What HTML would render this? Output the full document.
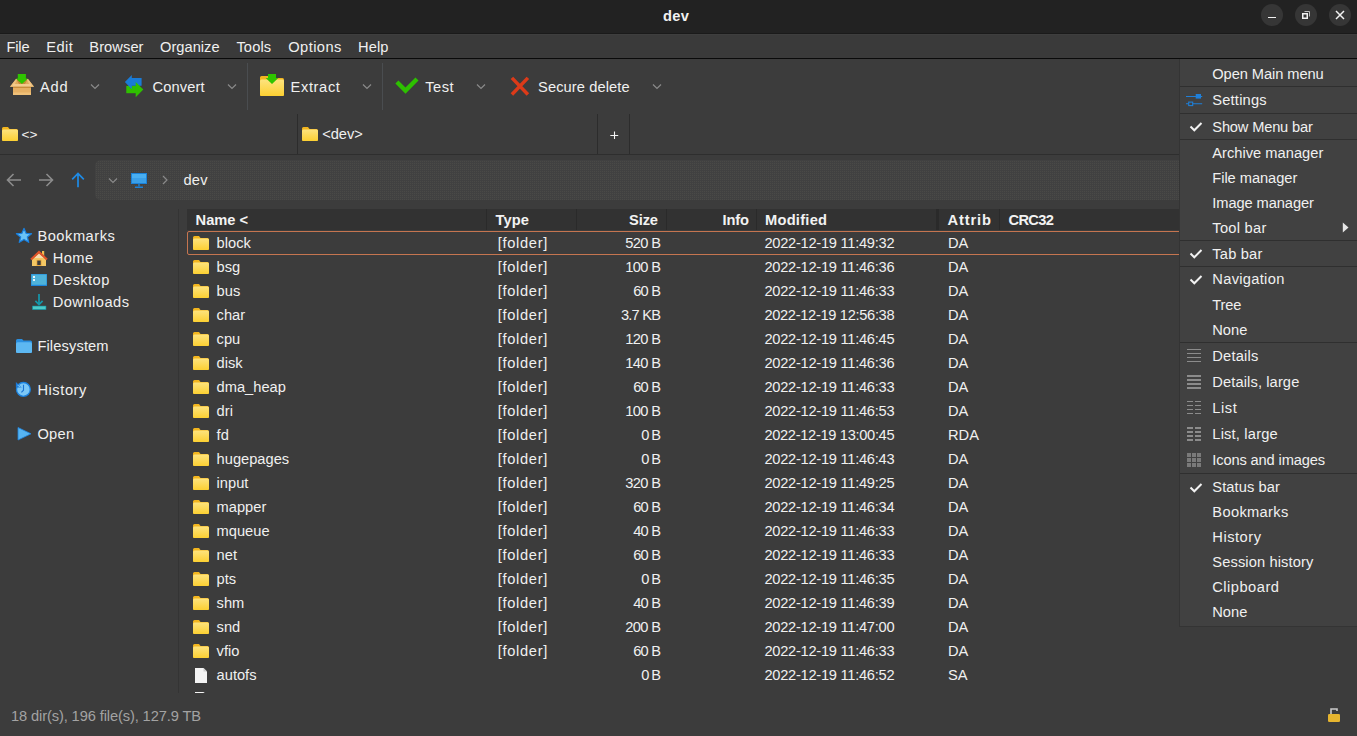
<!DOCTYPE html>
<html><head><meta charset="utf-8"><style>
html,body{margin:0;padding:0;}
body{width:1357px;height:736px;overflow:hidden;position:relative;background:#3c3c3c;font-family:"Liberation Sans",sans-serif;}
.t{position:absolute;white-space:pre;line-height:normal;}
svg{overflow:visible}
</style></head><body>
<svg width="0" height="0" style="position:absolute"><defs><linearGradient id="fg" x1="0" y1="0" x2="0" y2="1"><stop offset="0" stop-color="#fde37e"/><stop offset="1" stop-color="#fcd032"/></linearGradient></defs></svg>
<div style="position:absolute;left:0px;top:0px;width:1357px;height:33px;background:#222222;"></div>
<div style="position:absolute;left:0px;top:33px;width:1357px;height:1px;background:#1a1a1a;"></div>
<div style="position:absolute;left:0px;top:34px;width:1357px;height:24px;background:#3a3a3a;"></div>
<div style="position:absolute;left:0px;top:34px;width:1357px;height:1px;background:#3e3e3e;"></div>
<div style="position:absolute;left:0px;top:58px;width:1357px;height:1px;background:#0a0a0a;"></div>
<div class="t" style="left:663.00px;top:7.72px;color:#f2f2f2;font-size:14.67px;font-weight:700;letter-spacing:0.367px;">dev</div>
<div style="position:absolute;left:1261px;top:4px;width:22px;height:22px;border-radius:11px;background:#363636"></div>
<div style="position:absolute;left:1295px;top:4px;width:22px;height:22px;border-radius:11px;background:#363636"></div>
<div style="position:absolute;left:1329px;top:4px;width:22px;height:22px;border-radius:11px;background:#363636"></div>
<div style="position:absolute;left:1268px;top:16.5px;width:8px;height:1.6px;background:#f0f0f0;"></div>
<svg style="position:absolute;left:1298px;top:8px" width="14" height="14" viewBox="0 0 14 14"><path d="M6.5 3.5H11.5V8.5" fill="none" stroke="#bdbdbd" stroke-width="1"/><rect x="4.75" y="5.75" width="4.5" height="4.5" fill="none" stroke="#f2f2f2" stroke-width="1.5"/></svg>
<svg style="position:absolute;left:1333px;top:8px" width="14" height="14" viewBox="0 0 14 14"><path d="M3 3L11 11M11 3L3 11" stroke="#f2f2f2" stroke-width="1.5"/></svg>
<div class="t" style="left:6.50px;top:38.72px;color:#f0f0f0;font-size:14.67px;font-weight:400;letter-spacing:-0.175px;">File</div>
<div class="t" style="left:46.30px;top:38.72px;color:#f0f0f0;font-size:14.67px;font-weight:400;letter-spacing:0.411px;">Edit</div>
<div class="t" style="left:89.30px;top:38.72px;color:#f0f0f0;font-size:14.67px;font-weight:400;letter-spacing:0.072px;">Browser</div>
<div class="t" style="left:160.00px;top:38.72px;color:#f0f0f0;font-size:14.67px;font-weight:400;letter-spacing:0.017px;">Organize</div>
<div class="t" style="left:236.40px;top:38.72px;color:#f0f0f0;font-size:14.67px;font-weight:400;letter-spacing:0.145px;">Tools</div>
<div class="t" style="left:288.30px;top:38.72px;color:#f0f0f0;font-size:14.67px;font-weight:400;letter-spacing:0.414px;">Options</div>
<div class="t" style="left:358.10px;top:38.72px;color:#f0f0f0;font-size:14.67px;font-weight:400;letter-spacing:0.081px;">Help</div>
<div style="position:absolute;left:247px;top:63px;width:1px;height:47px;background:#4a4d50;"></div>
<div style="position:absolute;left:382px;top:63px;width:1px;height:47px;background:#4a4d50;"></div>
<svg style="position:absolute;left:8px;top:70px" width="30" height="30" viewBox="0 0 30 30">
<path d="M2 16.8L8 9H20L26 16.8Z" fill="#e0aa5c"/>
<path d="M2 16.8L8 9L9.5 9L5.5 16.8Z" fill="#eec27e"/>
<path d="M26 16.8L20 9L18.5 9L22.5 16.8Z" fill="#eec27e"/>
<path d="M8.5 9.5H19.5L17 14H11Z" fill="#c58a38"/>
<rect x="5" y="14" width="18" height="2.8" fill="#f3ca8c"/>
<rect x="5" y="16.8" width="18" height="8.2" fill="#e6b064"/>
<rect x="5" y="16.8" width="18" height="1.2" fill="#c78d3c"/>
<rect x="5" y="22.5" width="18" height="2.5" fill="#efc078"/>
<path d="M9.8 4H17.9V8.4H20L13.9 14L7.8 8.4H9.8Z" fill="#2fc400"/>
</svg>
<div class="t" style="left:40.00px;top:78.72px;color:#f0f0f0;font-size:14.67px;font-weight:400;letter-spacing:0.761px;">Add</div>
<svg style="position:absolute;left:90px;top:83px" width="10" height="7" viewBox="0 0 10 7"><path d="M1 1.5L5 5.5L9 1.5" fill="none" stroke="#8a8a8a" stroke-width="1.2"/></svg>
<svg style="position:absolute;left:120px;top:70px" width="30" height="30" viewBox="0 0 30 30">
<rect x="6.3" y="15.9" width="10.2" height="7.3" fill="#2fc000"/>
<path d="M4.9 12L11.8 4.9V8H21.6V15.7H11.8V19.2Z" fill="#1a7bd6"/>
<path d="M23.3 19.6L15.7 12.1V27.3Z" fill="#2fc000"/>
</svg>
<div class="t" style="left:152.60px;top:78.72px;color:#f0f0f0;font-size:14.67px;font-weight:400;letter-spacing:0.112px;">Convert</div>
<svg style="position:absolute;left:227px;top:83px" width="10" height="7" viewBox="0 0 10 7"><path d="M1 1.5L5 5.5L9 1.5" fill="none" stroke="#8a8a8a" stroke-width="1.2"/></svg>
<svg style="position:absolute;left:256px;top:70px" width="32" height="30" viewBox="0 0 32 30">
<path d="M4 7.5Q4 6 5.5 6H12L13 8H26.5Q28 8 28 9.5V24.5Q28 26 26.5 26H5.5Q4 26 4 24.5Z" fill="#f2b51e"/>
<rect x="4" y="9.5" width="24" height="16.5" rx="1.5" fill="url(#fg)"/>
<path d="M12 4H20V8H22.3L16 14L9.7 8H12Z" fill="#2fc400"/>
</svg>
<div class="t" style="left:290.60px;top:78.72px;color:#f0f0f0;font-size:14.67px;font-weight:400;letter-spacing:0.615px;">Extract</div>
<svg style="position:absolute;left:362px;top:83px" width="10" height="7" viewBox="0 0 10 7"><path d="M1 1.5L5 5.5L9 1.5" fill="none" stroke="#8a8a8a" stroke-width="1.2"/></svg>
<svg style="position:absolute;left:392px;top:72px" width="30" height="28" viewBox="0 0 30 28"><path d="M4.9 10L13.5 18.6L25 7.1" fill="none" stroke="#2dc000" stroke-width="4.3" stroke-linecap="butt" stroke-linejoin="miter"/></svg>
<div class="t" style="left:425.30px;top:78.72px;color:#f0f0f0;font-size:14.67px;font-weight:400;letter-spacing:0.470px;">Test</div>
<svg style="position:absolute;left:476px;top:83px" width="10" height="7" viewBox="0 0 10 7"><path d="M1 1.5L5 5.5L9 1.5" fill="none" stroke="#8a8a8a" stroke-width="1.2"/></svg>
<svg style="position:absolute;left:506px;top:72px" width="28" height="28" viewBox="0 0 28 28"><path d="M5.9 5.9L21.9 22.5M21.9 5.9L5.9 22.5" stroke="#dc3a19" stroke-width="3.5" stroke-linecap="butt"/></svg>
<div class="t" style="left:538.00px;top:78.72px;color:#f0f0f0;font-size:14.67px;font-weight:400;letter-spacing:0.104px;">Secure delete</div>
<svg style="position:absolute;left:652px;top:83px" width="10" height="7" viewBox="0 0 10 7"><path d="M1 1.5L5 5.5L9 1.5" fill="none" stroke="#8a8a8a" stroke-width="1.2"/></svg>
<div style="position:absolute;left:0px;top:154px;width:1357px;height:1px;background:#2e2e2e;"></div>
<div style="position:absolute;left:297px;top:114px;width:1px;height:40px;background:#2c2c2c;"></div>
<div style="position:absolute;left:597px;top:114px;width:1px;height:40px;background:#2c2c2c;"></div>
<div style="position:absolute;left:629px;top:114px;width:1px;height:40px;background:#2c2c2c;"></div>
<svg style="position:absolute;left:2px;top:127px" width="16" height="14" viewBox="0 0 16 14">
<path d="M0 1.5Q0 0 1.5 0H6L7.5 2H14.5Q16 2 16 3.5V12.5Q16 14 14.5 14H1.5Q0 14 0 12.5Z" fill="#f2b51e"/>
<rect x="0" y="2.5" width="16" height="11.5" rx="1.5" fill="url(#fg)"/>
</svg>
<div class="t" style="left:21.50px;top:127.49px;color:#f0f0f0;font-size:13.6px;font-weight:400;">&lt;&gt;</div>
<svg style="position:absolute;left:302px;top:127px" width="16" height="14" viewBox="0 0 16 14">
<path d="M0 1.5Q0 0 1.5 0H6L7.5 2H14.5Q16 2 16 3.5V12.5Q16 14 14.5 14H1.5Q0 14 0 12.5Z" fill="#f2b51e"/>
<rect x="0" y="2.5" width="16" height="11.5" rx="1.5" fill="url(#fg)"/>
</svg>
<div class="t" style="left:322.20px;top:125.72px;color:#f0f0f0;font-size:14.67px;font-weight:400;letter-spacing:-0.012px;">&lt;dev&gt;</div>
<svg style="position:absolute;left:609px;top:130px" width="10" height="10" viewBox="0 0 10 10"><path d="M5.5 1.5V9M1.3 5.5H9.2" stroke="#f4f4f4" stroke-width="1.1"/></svg>
<svg style="position:absolute;left:4px;top:170px" width="20" height="20" viewBox="0 0 20 20"><path d="M17 10H3.5M9.5 4L3.5 10L9.5 16" fill="none" stroke="#8c8c8c" stroke-width="1.6"/></svg>
<svg style="position:absolute;left:37px;top:170px" width="20" height="20" viewBox="0 0 20 20"><path d="M2 10H15.5M9.5 4L15.5 10L9.5 16" fill="none" stroke="#8c8c8c" stroke-width="1.6"/></svg>
<svg style="position:absolute;left:68px;top:170px" width="20" height="20" viewBox="0 0 20 20"><path d="M10 17.2V3.5M4.2 9.3L10 3.5L15.8 9.3" fill="none" stroke="#1e8be6" stroke-width="1.7"/></svg>
<div style="position:absolute;left:95px;top:160px;width:1100px;height:40px;border-radius:6px;background:conic-gradient(from 90deg, #4a4a47 25%, #414141 0) 0 0/2px 2px"></div>
<svg style="position:absolute;left:108px;top:177px" width="10" height="7" viewBox="0 0 10 7"><path d="M1 1.5L5 5.5L9 1.5" fill="none" stroke="#8a8a8a" stroke-width="1.2"/></svg>
<svg style="position:absolute;left:130px;top:172px" width="18" height="17" viewBox="0 0 18 17">
<rect x="1" y="1" width="16" height="11" fill="#1b82d8"/>
<rect x="2" y="2" width="14" height="9" fill="#49aef0"/>
<rect x="2" y="6" width="14" height="5" fill="#3ba0e8"/>
<rect x="8.3" y="12" width="1.4" height="2.5" fill="#1b82d8"/>
<rect x="5" y="14.5" width="8" height="1.5" fill="#1b82d8"/>
</svg>
<svg style="position:absolute;left:161px;top:175px" width="8" height="10" viewBox="0 0 8 10"><path d="M2 1L6 5L2 9" fill="none" stroke="#8a8a8a" stroke-width="1.2"/></svg>
<div class="t" style="left:183.40px;top:172.32px;color:#f0f0f0;font-size:14.67px;font-weight:400;letter-spacing:0.280px;">dev</div>
<div style="position:absolute;left:178px;top:209px;width:1px;height:484px;background:#343434;"></div>
<svg style="position:absolute;left:15px;top:227px" width="18" height="18" viewBox="0 0 18 18"><path d="M9 1.4L11.1 6.3L16.5 6.7L12.4 10.1L13.7 15.3L9 12.5L4.3 15.3L5.6 10.1L1.5 6.7L6.9 6.3Z" fill="#6ac3f7" stroke="#1a80de" stroke-width="1.3" stroke-linejoin="round"/></svg>
<div class="t" style="left:37.40px;top:227.72px;color:#f0f0f0;font-size:14.67px;font-weight:400;letter-spacing:0.523px;">Bookmarks</div>
<svg style="position:absolute;left:30px;top:250px" width="18" height="17" viewBox="0 0 18 17">
<rect x="12" y="1" width="2.2" height="5" fill="#f0c050"/>
<path d="M2 9.5L9 3L16 9.5V16H2Z" fill="#f3c764"/>
<path d="M4 8L9 3.5L14 8Z" fill="#f5dcae"/>
<path d="M1 9.6L9 2L17 9.6" fill="none" stroke="#e0542a" stroke-width="2.1"/>
<rect x="6.5" y="9.8" width="5" height="6.2" fill="#e5a63c"/>
<rect x="7.3" y="10.6" width="3.4" height="4.4" fill="#3c3c3c"/>
</svg>
<div class="t" style="left:52.70px;top:249.72px;color:#f0f0f0;font-size:14.67px;font-weight:400;letter-spacing:0.430px;">Home</div>
<svg style="position:absolute;left:30px;top:273px" width="18" height="14" viewBox="0 0 18 14">
<rect x="1" y="1" width="16" height="12" fill="#1c86dc"/>
<rect x="1.5" y="1.5" width="15" height="10.3" fill="#4fb3da"/>
<rect x="3" y="3" width="2" height="2" fill="#e8f4fa"/>
<rect x="3" y="6" width="2" height="2" fill="#e8f4fa"/>
</svg>
<div class="t" style="left:52.70px;top:271.72px;color:#f0f0f0;font-size:14.67px;font-weight:400;letter-spacing:0.486px;">Desktop</div>
<svg style="position:absolute;left:30px;top:292px" width="18" height="19" viewBox="0 0 18 19">
<path d="M9 2V12.3M5.4 8.9L9 12.5L12.6 8.9" fill="none" stroke="#1498ac" stroke-width="1.7"/>
<rect x="2.2" y="13.8" width="14" height="4" fill="#1aa0b0"/>
<rect x="3" y="14.5" width="12.5" height="2.6" fill="#4ccac8"/>
</svg>
<div class="t" style="left:52.70px;top:293.72px;color:#f0f0f0;font-size:14.67px;font-weight:400;letter-spacing:0.473px;">Downloads</div>
<svg style="position:absolute;left:15px;top:338px" width="18" height="16" viewBox="0 0 18 16">
<path d="M1 2.5Q1 1 2.5 1H7L8.5 2.5H15.5Q17 2.5 17 4V13.5Q17 15 15.5 15H2.5Q1 15 1 13.5Z" fill="#2a8fe0"/>
<rect x="1" y="4.3" width="16" height="10.7" rx="1.5" fill="#5db8f2"/>
</svg>
<div class="t" style="left:37.40px;top:337.72px;color:#f0f0f0;font-size:14.67px;font-weight:400;letter-spacing:0.128px;">Filesystem</div>
<svg style="position:absolute;left:14px;top:380px" width="18" height="18" viewBox="0 0 18 18">
<circle cx="9.4" cy="9.4" r="6.9" fill="#7cc8f7" stroke="#1a82e0" stroke-width="1.3"/>
<path d="M1.9 1.9V7.6H7.7Z" fill="#1a7ad8"/>
<path d="M3.5 5.2L6.5 7" stroke="#7cc8f7" stroke-width="1"/>
<path d="M9.5 4.8V10.2L7.4 12.3" fill="none" stroke="#1a74d4" stroke-width="1.1"/>
</svg>
<div class="t" style="left:37.40px;top:381.72px;color:#f0f0f0;font-size:14.67px;font-weight:400;letter-spacing:0.565px;">History</div>
<svg style="position:absolute;left:16px;top:426px" width="17" height="16" viewBox="0 0 17 16"><path d="M2 1.5L15 7.8L2 14Z" fill="#56b4f2" stroke="#1d84e0" stroke-width="0.8" stroke-linejoin="round"/></svg>
<div class="t" style="left:37.40px;top:425.72px;color:#f0f0f0;font-size:14.67px;font-weight:400;letter-spacing:0.314px;">Open</div>
<div style="position:absolute;left:187px;top:209px;width:993px;height:21px;background:#323232;"></div>
<div style="position:absolute;left:486px;top:209px;width:1px;height:21px;background:#2a2a2a;"></div>
<div style="position:absolute;left:576px;top:209px;width:1px;height:21px;background:#2a2a2a;"></div>
<div style="position:absolute;left:666px;top:209px;width:1px;height:21px;background:#2a2a2a;"></div>
<div style="position:absolute;left:756px;top:209px;width:1px;height:21px;background:#2a2a2a;"></div>
<div style="position:absolute;left:936px;top:209px;width:3px;height:21px;background:#2a2a2a;"></div>
<div style="position:absolute;left:999px;top:209px;width:1px;height:21px;background:#2a2a2a;"></div>
<div class="t" style="left:195.60px;top:211.72px;color:#f2f2f2;font-size:14.67px;font-weight:700;letter-spacing:-0.033px;">Name &lt;</div>
<div class="t" style="left:495.50px;top:211.72px;color:#f2f2f2;font-size:14.67px;font-weight:700;letter-spacing:0.125px;">Type</div>
<div class="t" style="left:629.00px;top:211.72px;color:#f2f2f2;font-size:14.67px;font-weight:700;letter-spacing:-0.109px;">Size</div>
<div class="t" style="left:722.50px;top:211.72px;color:#f2f2f2;font-size:14.67px;font-weight:700;letter-spacing:-0.120px;">Info</div>
<div class="t" style="left:765.00px;top:211.72px;color:#f2f2f2;font-size:14.67px;font-weight:700;letter-spacing:0.250px;">Modified</div>
<div class="t" style="left:947.50px;top:211.72px;color:#f2f2f2;font-size:14.67px;font-weight:700;letter-spacing:0.884px;">Attrib</div>
<div class="t" style="left:1008.50px;top:211.72px;color:#f2f2f2;font-size:14.67px;font-weight:700;letter-spacing:-0.691px;">CRC32</div>
<div style="position:absolute;left:187px;top:231px;width:993px;height:462px;overflow:hidden">
<div style="position:absolute;left:0px;top:0px;width:1000px;height:22px;border:1px solid #c57550;border-radius:2px"></div>
<svg style="position:absolute;left:6px;top:5px" width="16" height="14" viewBox="0 0 16 14">
<path d="M0 1.5Q0 0 1.5 0H6L7.5 2H14.5Q16 2 16 3.5V12.5Q16 14 14.5 14H1.5Q0 14 0 12.5Z" fill="#f2b51e"/>
<rect x="0" y="2.5" width="16" height="11.5" rx="1.5" fill="url(#fg)"/>
</svg>
<div class="t" style="left:29.60px;top:3.72px;color:#f0f0f0;font-size:14.67px;font-weight:400;">block</div>
<div class="t" style="left:310.80px;top:3.72px;color:#f0f0f0;font-size:14.67px;font-weight:400;letter-spacing:0.670px;">[folder]</div>
<div class="t" style="left:438.20px;top:3.72px;color:#f0f0f0;font-size:14.67px;font-weight:400;letter-spacing:-0.628px;">520 B</div>
<div class="t" style="left:577.40px;top:3.72px;color:#f0f0f0;font-size:14.67px;font-weight:400;letter-spacing:-0.268px;">2022-12-19 11:49:32</div>
<div class="t" style="left:761.00px;top:3.72px;color:#f0f0f0;font-size:14.67px;font-weight:400;">DA</div>
<svg style="position:absolute;left:6px;top:29px" width="16" height="14" viewBox="0 0 16 14">
<path d="M0 1.5Q0 0 1.5 0H6L7.5 2H14.5Q16 2 16 3.5V12.5Q16 14 14.5 14H1.5Q0 14 0 12.5Z" fill="#f2b51e"/>
<rect x="0" y="2.5" width="16" height="11.5" rx="1.5" fill="url(#fg)"/>
</svg>
<div class="t" style="left:29.60px;top:27.72px;color:#f0f0f0;font-size:14.67px;font-weight:400;">bsg</div>
<div class="t" style="left:310.80px;top:27.72px;color:#f0f0f0;font-size:14.67px;font-weight:400;letter-spacing:0.670px;">[folder]</div>
<div class="t" style="left:438.20px;top:27.72px;color:#f0f0f0;font-size:14.67px;font-weight:400;letter-spacing:-0.628px;">100 B</div>
<div class="t" style="left:577.40px;top:27.72px;color:#f0f0f0;font-size:14.67px;font-weight:400;letter-spacing:-0.268px;">2022-12-19 11:46:36</div>
<div class="t" style="left:761.00px;top:27.72px;color:#f0f0f0;font-size:14.67px;font-weight:400;">DA</div>
<svg style="position:absolute;left:6px;top:53px" width="16" height="14" viewBox="0 0 16 14">
<path d="M0 1.5Q0 0 1.5 0H6L7.5 2H14.5Q16 2 16 3.5V12.5Q16 14 14.5 14H1.5Q0 14 0 12.5Z" fill="#f2b51e"/>
<rect x="0" y="2.5" width="16" height="11.5" rx="1.5" fill="url(#fg)"/>
</svg>
<div class="t" style="left:29.60px;top:51.72px;color:#f0f0f0;font-size:14.67px;font-weight:400;">bus</div>
<div class="t" style="left:310.80px;top:51.72px;color:#f0f0f0;font-size:14.67px;font-weight:400;letter-spacing:0.670px;">[folder]</div>
<div class="t" style="left:446.20px;top:51.72px;color:#f0f0f0;font-size:14.67px;font-weight:400;letter-spacing:-0.785px;">60 B</div>
<div class="t" style="left:577.40px;top:51.72px;color:#f0f0f0;font-size:14.67px;font-weight:400;letter-spacing:-0.268px;">2022-12-19 11:46:33</div>
<div class="t" style="left:761.00px;top:51.72px;color:#f0f0f0;font-size:14.67px;font-weight:400;">DA</div>
<svg style="position:absolute;left:6px;top:77px" width="16" height="14" viewBox="0 0 16 14">
<path d="M0 1.5Q0 0 1.5 0H6L7.5 2H14.5Q16 2 16 3.5V12.5Q16 14 14.5 14H1.5Q0 14 0 12.5Z" fill="#f2b51e"/>
<rect x="0" y="2.5" width="16" height="11.5" rx="1.5" fill="url(#fg)"/>
</svg>
<div class="t" style="left:29.60px;top:75.72px;color:#f0f0f0;font-size:14.67px;font-weight:400;">char</div>
<div class="t" style="left:310.80px;top:75.72px;color:#f0f0f0;font-size:14.67px;font-weight:400;letter-spacing:0.670px;">[folder]</div>
<div class="t" style="left:433.90px;top:75.72px;color:#f0f0f0;font-size:14.67px;font-weight:400;letter-spacing:-0.780px;">3.7 KB</div>
<div class="t" style="left:577.40px;top:75.72px;color:#f0f0f0;font-size:14.67px;font-weight:400;letter-spacing:-0.327px;">2022-12-19 12:56:38</div>
<div class="t" style="left:761.00px;top:75.72px;color:#f0f0f0;font-size:14.67px;font-weight:400;">DA</div>
<svg style="position:absolute;left:6px;top:101px" width="16" height="14" viewBox="0 0 16 14">
<path d="M0 1.5Q0 0 1.5 0H6L7.5 2H14.5Q16 2 16 3.5V12.5Q16 14 14.5 14H1.5Q0 14 0 12.5Z" fill="#f2b51e"/>
<rect x="0" y="2.5" width="16" height="11.5" rx="1.5" fill="url(#fg)"/>
</svg>
<div class="t" style="left:29.60px;top:99.72px;color:#f0f0f0;font-size:14.67px;font-weight:400;">cpu</div>
<div class="t" style="left:310.80px;top:99.72px;color:#f0f0f0;font-size:14.67px;font-weight:400;letter-spacing:0.670px;">[folder]</div>
<div class="t" style="left:438.20px;top:99.72px;color:#f0f0f0;font-size:14.67px;font-weight:400;letter-spacing:-0.628px;">120 B</div>
<div class="t" style="left:577.40px;top:99.72px;color:#f0f0f0;font-size:14.67px;font-weight:400;letter-spacing:-0.268px;">2022-12-19 11:46:45</div>
<div class="t" style="left:761.00px;top:99.72px;color:#f0f0f0;font-size:14.67px;font-weight:400;">DA</div>
<svg style="position:absolute;left:6px;top:125px" width="16" height="14" viewBox="0 0 16 14">
<path d="M0 1.5Q0 0 1.5 0H6L7.5 2H14.5Q16 2 16 3.5V12.5Q16 14 14.5 14H1.5Q0 14 0 12.5Z" fill="#f2b51e"/>
<rect x="0" y="2.5" width="16" height="11.5" rx="1.5" fill="url(#fg)"/>
</svg>
<div class="t" style="left:29.60px;top:123.72px;color:#f0f0f0;font-size:14.67px;font-weight:400;">disk</div>
<div class="t" style="left:310.80px;top:123.72px;color:#f0f0f0;font-size:14.67px;font-weight:400;letter-spacing:0.670px;">[folder]</div>
<div class="t" style="left:438.20px;top:123.72px;color:#f0f0f0;font-size:14.67px;font-weight:400;letter-spacing:-0.628px;">140 B</div>
<div class="t" style="left:577.40px;top:123.72px;color:#f0f0f0;font-size:14.67px;font-weight:400;letter-spacing:-0.268px;">2022-12-19 11:46:36</div>
<div class="t" style="left:761.00px;top:123.72px;color:#f0f0f0;font-size:14.67px;font-weight:400;">DA</div>
<svg style="position:absolute;left:6px;top:149px" width="16" height="14" viewBox="0 0 16 14">
<path d="M0 1.5Q0 0 1.5 0H6L7.5 2H14.5Q16 2 16 3.5V12.5Q16 14 14.5 14H1.5Q0 14 0 12.5Z" fill="#f2b51e"/>
<rect x="0" y="2.5" width="16" height="11.5" rx="1.5" fill="url(#fg)"/>
</svg>
<div class="t" style="left:29.60px;top:147.72px;color:#f0f0f0;font-size:14.67px;font-weight:400;">dma_heap</div>
<div class="t" style="left:310.80px;top:147.72px;color:#f0f0f0;font-size:14.67px;font-weight:400;letter-spacing:0.670px;">[folder]</div>
<div class="t" style="left:446.20px;top:147.72px;color:#f0f0f0;font-size:14.67px;font-weight:400;letter-spacing:-0.785px;">60 B</div>
<div class="t" style="left:577.40px;top:147.72px;color:#f0f0f0;font-size:14.67px;font-weight:400;letter-spacing:-0.268px;">2022-12-19 11:46:33</div>
<div class="t" style="left:761.00px;top:147.72px;color:#f0f0f0;font-size:14.67px;font-weight:400;">DA</div>
<svg style="position:absolute;left:6px;top:173px" width="16" height="14" viewBox="0 0 16 14">
<path d="M0 1.5Q0 0 1.5 0H6L7.5 2H14.5Q16 2 16 3.5V12.5Q16 14 14.5 14H1.5Q0 14 0 12.5Z" fill="#f2b51e"/>
<rect x="0" y="2.5" width="16" height="11.5" rx="1.5" fill="url(#fg)"/>
</svg>
<div class="t" style="left:29.60px;top:171.72px;color:#f0f0f0;font-size:14.67px;font-weight:400;">dri</div>
<div class="t" style="left:310.80px;top:171.72px;color:#f0f0f0;font-size:14.67px;font-weight:400;letter-spacing:0.670px;">[folder]</div>
<div class="t" style="left:438.20px;top:171.72px;color:#f0f0f0;font-size:14.67px;font-weight:400;letter-spacing:-0.628px;">100 B</div>
<div class="t" style="left:577.40px;top:171.72px;color:#f0f0f0;font-size:14.67px;font-weight:400;letter-spacing:-0.268px;">2022-12-19 11:46:53</div>
<div class="t" style="left:761.00px;top:171.72px;color:#f0f0f0;font-size:14.67px;font-weight:400;">DA</div>
<svg style="position:absolute;left:6px;top:197px" width="16" height="14" viewBox="0 0 16 14">
<path d="M0 1.5Q0 0 1.5 0H6L7.5 2H14.5Q16 2 16 3.5V12.5Q16 14 14.5 14H1.5Q0 14 0 12.5Z" fill="#f2b51e"/>
<rect x="0" y="2.5" width="16" height="11.5" rx="1.5" fill="url(#fg)"/>
</svg>
<div class="t" style="left:29.60px;top:195.72px;color:#f0f0f0;font-size:14.67px;font-weight:400;">fd</div>
<div class="t" style="left:310.80px;top:195.72px;color:#f0f0f0;font-size:14.67px;font-weight:400;letter-spacing:0.670px;">[folder]</div>
<div class="t" style="left:454.20px;top:195.72px;color:#f0f0f0;font-size:14.67px;font-weight:400;letter-spacing:-1.100px;">0 B</div>
<div class="t" style="left:577.40px;top:195.72px;color:#f0f0f0;font-size:14.67px;font-weight:400;letter-spacing:-0.327px;">2022-12-19 13:00:45</div>
<div class="t" style="left:761.00px;top:195.72px;color:#f0f0f0;font-size:14.67px;font-weight:400;">RDA</div>
<svg style="position:absolute;left:6px;top:221px" width="16" height="14" viewBox="0 0 16 14">
<path d="M0 1.5Q0 0 1.5 0H6L7.5 2H14.5Q16 2 16 3.5V12.5Q16 14 14.5 14H1.5Q0 14 0 12.5Z" fill="#f2b51e"/>
<rect x="0" y="2.5" width="16" height="11.5" rx="1.5" fill="url(#fg)"/>
</svg>
<div class="t" style="left:29.60px;top:219.72px;color:#f0f0f0;font-size:14.67px;font-weight:400;">hugepages</div>
<div class="t" style="left:310.80px;top:219.72px;color:#f0f0f0;font-size:14.67px;font-weight:400;letter-spacing:0.670px;">[folder]</div>
<div class="t" style="left:454.20px;top:219.72px;color:#f0f0f0;font-size:14.67px;font-weight:400;letter-spacing:-1.100px;">0 B</div>
<div class="t" style="left:577.40px;top:219.72px;color:#f0f0f0;font-size:14.67px;font-weight:400;letter-spacing:-0.268px;">2022-12-19 11:46:43</div>
<div class="t" style="left:761.00px;top:219.72px;color:#f0f0f0;font-size:14.67px;font-weight:400;">DA</div>
<svg style="position:absolute;left:6px;top:245px" width="16" height="14" viewBox="0 0 16 14">
<path d="M0 1.5Q0 0 1.5 0H6L7.5 2H14.5Q16 2 16 3.5V12.5Q16 14 14.5 14H1.5Q0 14 0 12.5Z" fill="#f2b51e"/>
<rect x="0" y="2.5" width="16" height="11.5" rx="1.5" fill="url(#fg)"/>
</svg>
<div class="t" style="left:29.60px;top:243.72px;color:#f0f0f0;font-size:14.67px;font-weight:400;">input</div>
<div class="t" style="left:310.80px;top:243.72px;color:#f0f0f0;font-size:14.67px;font-weight:400;letter-spacing:0.670px;">[folder]</div>
<div class="t" style="left:438.20px;top:243.72px;color:#f0f0f0;font-size:14.67px;font-weight:400;letter-spacing:-0.628px;">320 B</div>
<div class="t" style="left:577.40px;top:243.72px;color:#f0f0f0;font-size:14.67px;font-weight:400;letter-spacing:-0.268px;">2022-12-19 11:49:25</div>
<div class="t" style="left:761.00px;top:243.72px;color:#f0f0f0;font-size:14.67px;font-weight:400;">DA</div>
<svg style="position:absolute;left:6px;top:269px" width="16" height="14" viewBox="0 0 16 14">
<path d="M0 1.5Q0 0 1.5 0H6L7.5 2H14.5Q16 2 16 3.5V12.5Q16 14 14.5 14H1.5Q0 14 0 12.5Z" fill="#f2b51e"/>
<rect x="0" y="2.5" width="16" height="11.5" rx="1.5" fill="url(#fg)"/>
</svg>
<div class="t" style="left:29.60px;top:267.72px;color:#f0f0f0;font-size:14.67px;font-weight:400;">mapper</div>
<div class="t" style="left:310.80px;top:267.72px;color:#f0f0f0;font-size:14.67px;font-weight:400;letter-spacing:0.670px;">[folder]</div>
<div class="t" style="left:446.20px;top:267.72px;color:#f0f0f0;font-size:14.67px;font-weight:400;letter-spacing:-0.785px;">60 B</div>
<div class="t" style="left:577.40px;top:267.72px;color:#f0f0f0;font-size:14.67px;font-weight:400;letter-spacing:-0.268px;">2022-12-19 11:46:34</div>
<div class="t" style="left:761.00px;top:267.72px;color:#f0f0f0;font-size:14.67px;font-weight:400;">DA</div>
<svg style="position:absolute;left:6px;top:293px" width="16" height="14" viewBox="0 0 16 14">
<path d="M0 1.5Q0 0 1.5 0H6L7.5 2H14.5Q16 2 16 3.5V12.5Q16 14 14.5 14H1.5Q0 14 0 12.5Z" fill="#f2b51e"/>
<rect x="0" y="2.5" width="16" height="11.5" rx="1.5" fill="url(#fg)"/>
</svg>
<div class="t" style="left:29.60px;top:291.72px;color:#f0f0f0;font-size:14.67px;font-weight:400;">mqueue</div>
<div class="t" style="left:310.80px;top:291.72px;color:#f0f0f0;font-size:14.67px;font-weight:400;letter-spacing:0.670px;">[folder]</div>
<div class="t" style="left:446.20px;top:291.72px;color:#f0f0f0;font-size:14.67px;font-weight:400;letter-spacing:-0.785px;">40 B</div>
<div class="t" style="left:577.40px;top:291.72px;color:#f0f0f0;font-size:14.67px;font-weight:400;letter-spacing:-0.268px;">2022-12-19 11:46:33</div>
<div class="t" style="left:761.00px;top:291.72px;color:#f0f0f0;font-size:14.67px;font-weight:400;">DA</div>
<svg style="position:absolute;left:6px;top:317px" width="16" height="14" viewBox="0 0 16 14">
<path d="M0 1.5Q0 0 1.5 0H6L7.5 2H14.5Q16 2 16 3.5V12.5Q16 14 14.5 14H1.5Q0 14 0 12.5Z" fill="#f2b51e"/>
<rect x="0" y="2.5" width="16" height="11.5" rx="1.5" fill="url(#fg)"/>
</svg>
<div class="t" style="left:29.60px;top:315.72px;color:#f0f0f0;font-size:14.67px;font-weight:400;">net</div>
<div class="t" style="left:310.80px;top:315.72px;color:#f0f0f0;font-size:14.67px;font-weight:400;letter-spacing:0.670px;">[folder]</div>
<div class="t" style="left:446.20px;top:315.72px;color:#f0f0f0;font-size:14.67px;font-weight:400;letter-spacing:-0.785px;">60 B</div>
<div class="t" style="left:577.40px;top:315.72px;color:#f0f0f0;font-size:14.67px;font-weight:400;letter-spacing:-0.268px;">2022-12-19 11:46:33</div>
<div class="t" style="left:761.00px;top:315.72px;color:#f0f0f0;font-size:14.67px;font-weight:400;">DA</div>
<svg style="position:absolute;left:6px;top:341px" width="16" height="14" viewBox="0 0 16 14">
<path d="M0 1.5Q0 0 1.5 0H6L7.5 2H14.5Q16 2 16 3.5V12.5Q16 14 14.5 14H1.5Q0 14 0 12.5Z" fill="#f2b51e"/>
<rect x="0" y="2.5" width="16" height="11.5" rx="1.5" fill="url(#fg)"/>
</svg>
<div class="t" style="left:29.60px;top:339.72px;color:#f0f0f0;font-size:14.67px;font-weight:400;">pts</div>
<div class="t" style="left:310.80px;top:339.72px;color:#f0f0f0;font-size:14.67px;font-weight:400;letter-spacing:0.670px;">[folder]</div>
<div class="t" style="left:454.20px;top:339.72px;color:#f0f0f0;font-size:14.67px;font-weight:400;letter-spacing:-1.100px;">0 B</div>
<div class="t" style="left:577.40px;top:339.72px;color:#f0f0f0;font-size:14.67px;font-weight:400;letter-spacing:-0.268px;">2022-12-19 11:46:35</div>
<div class="t" style="left:761.00px;top:339.72px;color:#f0f0f0;font-size:14.67px;font-weight:400;">DA</div>
<svg style="position:absolute;left:6px;top:365px" width="16" height="14" viewBox="0 0 16 14">
<path d="M0 1.5Q0 0 1.5 0H6L7.5 2H14.5Q16 2 16 3.5V12.5Q16 14 14.5 14H1.5Q0 14 0 12.5Z" fill="#f2b51e"/>
<rect x="0" y="2.5" width="16" height="11.5" rx="1.5" fill="url(#fg)"/>
</svg>
<div class="t" style="left:29.60px;top:363.72px;color:#f0f0f0;font-size:14.67px;font-weight:400;">shm</div>
<div class="t" style="left:310.80px;top:363.72px;color:#f0f0f0;font-size:14.67px;font-weight:400;letter-spacing:0.670px;">[folder]</div>
<div class="t" style="left:446.20px;top:363.72px;color:#f0f0f0;font-size:14.67px;font-weight:400;letter-spacing:-0.785px;">40 B</div>
<div class="t" style="left:577.40px;top:363.72px;color:#f0f0f0;font-size:14.67px;font-weight:400;letter-spacing:-0.268px;">2022-12-19 11:46:39</div>
<div class="t" style="left:761.00px;top:363.72px;color:#f0f0f0;font-size:14.67px;font-weight:400;">DA</div>
<svg style="position:absolute;left:6px;top:389px" width="16" height="14" viewBox="0 0 16 14">
<path d="M0 1.5Q0 0 1.5 0H6L7.5 2H14.5Q16 2 16 3.5V12.5Q16 14 14.5 14H1.5Q0 14 0 12.5Z" fill="#f2b51e"/>
<rect x="0" y="2.5" width="16" height="11.5" rx="1.5" fill="url(#fg)"/>
</svg>
<div class="t" style="left:29.60px;top:387.72px;color:#f0f0f0;font-size:14.67px;font-weight:400;">snd</div>
<div class="t" style="left:310.80px;top:387.72px;color:#f0f0f0;font-size:14.67px;font-weight:400;letter-spacing:0.670px;">[folder]</div>
<div class="t" style="left:438.20px;top:387.72px;color:#f0f0f0;font-size:14.67px;font-weight:400;letter-spacing:-0.628px;">200 B</div>
<div class="t" style="left:577.40px;top:387.72px;color:#f0f0f0;font-size:14.67px;font-weight:400;letter-spacing:-0.268px;">2022-12-19 11:47:00</div>
<div class="t" style="left:761.00px;top:387.72px;color:#f0f0f0;font-size:14.67px;font-weight:400;">DA</div>
<svg style="position:absolute;left:6px;top:413px" width="16" height="14" viewBox="0 0 16 14">
<path d="M0 1.5Q0 0 1.5 0H6L7.5 2H14.5Q16 2 16 3.5V12.5Q16 14 14.5 14H1.5Q0 14 0 12.5Z" fill="#f2b51e"/>
<rect x="0" y="2.5" width="16" height="11.5" rx="1.5" fill="url(#fg)"/>
</svg>
<div class="t" style="left:29.60px;top:411.72px;color:#f0f0f0;font-size:14.67px;font-weight:400;">vfio</div>
<div class="t" style="left:310.80px;top:411.72px;color:#f0f0f0;font-size:14.67px;font-weight:400;letter-spacing:0.670px;">[folder]</div>
<div class="t" style="left:446.20px;top:411.72px;color:#f0f0f0;font-size:14.67px;font-weight:400;letter-spacing:-0.785px;">60 B</div>
<div class="t" style="left:577.40px;top:411.72px;color:#f0f0f0;font-size:14.67px;font-weight:400;letter-spacing:-0.268px;">2022-12-19 11:46:33</div>
<div class="t" style="left:761.00px;top:411.72px;color:#f0f0f0;font-size:14.67px;font-weight:400;">DA</div>
<svg style="position:absolute;left:7px;top:436px" width="14" height="17" viewBox="0 0 14 17"><path d="M1 1H9.5L13 4.5V16H1Z" fill="#f4f4f4"/><path d="M9.5 1V4.5H13" fill="#cfcfcf"/></svg>
<div class="t" style="left:29.60px;top:435.72px;color:#f0f0f0;font-size:14.67px;font-weight:400;">autofs</div>
<div class="t" style="left:454.20px;top:435.72px;color:#f0f0f0;font-size:14.67px;font-weight:400;letter-spacing:-1.100px;">0 B</div>
<div class="t" style="left:577.40px;top:435.72px;color:#f0f0f0;font-size:14.67px;font-weight:400;letter-spacing:-0.268px;">2022-12-19 11:46:52</div>
<div class="t" style="left:761.00px;top:435.72px;color:#f0f0f0;font-size:14.67px;font-weight:400;">SA</div>
<svg style="position:absolute;left:7px;top:460px" width="14" height="17" viewBox="0 0 14 17"><path d="M1 1H9.5L13 4.5V16H1Z" fill="#f4f4f4"/><path d="M9.5 1V4.5H13" fill="#cfcfcf"/></svg>
<div class="t" style="left:29.60px;top:459.72px;color:#f0f0f0;font-size:14.67px;font-weight:400;">btrfs-control</div>
<div class="t" style="left:454.20px;top:459.72px;color:#f0f0f0;font-size:14.67px;font-weight:400;letter-spacing:-1.100px;">0 B</div>
<div class="t" style="left:577.40px;top:459.72px;color:#f0f0f0;font-size:14.67px;font-weight:400;letter-spacing:-0.268px;">2022-12-19 11:46:52</div>
<div class="t" style="left:761.00px;top:459.72px;color:#f0f0f0;font-size:14.67px;font-weight:400;">SA</div>
</div>
<div class="t" style="left:11.00px;top:707.72px;color:#a3a3a3;font-size:14.67px;font-weight:400;letter-spacing:-0.116px;">18 dir(s), 196 file(s), 127.9 TB</div>
<svg style="position:absolute;left:1326px;top:706px" width="16" height="18" viewBox="0 0 16 18">
<path d="M5 8.5V3H11V5" fill="none" stroke="#c9c9c9" stroke-width="1.6"/>
<rect x="2" y="8" width="12" height="8" rx="1.3" fill="#e6b52f"/>
</svg>
<div style="position:absolute;left:1179px;top:59px;width:178px;height:567px;background:#414141;border-left:1px solid #343434;border-bottom:1px solid #343434"></div>
<div style="position:absolute;left:1180px;top:86px;width:177px;height:1px;background:#2f2f2f;"></div>
<div style="position:absolute;left:1180px;top:113px;width:177px;height:1px;background:#2f2f2f;"></div>
<div style="position:absolute;left:1180px;top:139px;width:177px;height:1px;background:#2f2f2f;"></div>
<div style="position:absolute;left:1180px;top:240px;width:177px;height:1px;background:#2f2f2f;"></div>
<div style="position:absolute;left:1180px;top:266px;width:177px;height:1px;background:#2f2f2f;"></div>
<div style="position:absolute;left:1180px;top:342px;width:177px;height:1px;background:#2f2f2f;"></div>
<div style="position:absolute;left:1180px;top:473px;width:177px;height:1px;background:#2f2f2f;"></div>
<div class="t" style="left:1212.30px;top:65.72px;color:#f0f0f0;font-size:14.67px;font-weight:400;letter-spacing:-0.080px;">Open Main menu</div>
<div class="t" style="left:1212.30px;top:91.72px;color:#f0f0f0;font-size:14.67px;font-weight:400;letter-spacing:0.190px;">Settings</div>
<svg style="position:absolute;left:1185px;top:94px" width="18" height="14" viewBox="0 0 18 14"><path d="M1 2.5H17.2M1 9.8H17.2" stroke="#1f7fd8" stroke-width="1.1"/><rect x="10.7" y="0" width="5.3" height="4.6" fill="#1f7fd8"/><rect x="3.7" y="8.1" width="4" height="3.5" fill="#414141" stroke="#1f7fd8" stroke-width="1.1"/></svg>
<div class="t" style="left:1212.30px;top:118.72px;color:#f0f0f0;font-size:14.67px;font-weight:400;letter-spacing:-0.180px;">Show Menu bar</div>
<svg style="position:absolute;left:1188px;top:121px" width="16" height="12" viewBox="0 0 16 12"><path d="M2.5 5.5L6.3 9.3L13.5 2" fill="none" stroke="#f2f2f2" stroke-width="2"/></svg>
<div class="t" style="left:1212.30px;top:144.72px;color:#f0f0f0;font-size:14.67px;font-weight:400;letter-spacing:0.015px;">Archive manager</div>
<div class="t" style="left:1212.30px;top:169.72px;color:#f0f0f0;font-size:14.67px;font-weight:400;letter-spacing:-0.050px;">File manager</div>
<div class="t" style="left:1212.30px;top:194.72px;color:#f0f0f0;font-size:14.67px;font-weight:400;letter-spacing:-0.088px;">Image manager</div>
<div class="t" style="left:1212.30px;top:219.72px;color:#f0f0f0;font-size:14.67px;font-weight:400;letter-spacing:0.266px;">Tool bar</div>
<svg style="position:absolute;left:1342px;top:222px" width="8" height="12" viewBox="0 0 8 12"><path d="M0.8 0.5L6.5 5.5L0.8 10.5Z" fill="#e6e6e6"/></svg>
<div class="t" style="left:1212.30px;top:245.72px;color:#f0f0f0;font-size:14.67px;font-weight:400;letter-spacing:0.185px;">Tab bar</div>
<svg style="position:absolute;left:1188px;top:248px" width="16" height="12" viewBox="0 0 16 12"><path d="M2.5 5.5L6.3 9.3L13.5 2" fill="none" stroke="#f2f2f2" stroke-width="2"/></svg>
<div class="t" style="left:1212.30px;top:271.22px;color:#f0f0f0;font-size:14.67px;font-weight:400;letter-spacing:0.304px;">Navigation</div>
<svg style="position:absolute;left:1188px;top:273.5px" width="16" height="12" viewBox="0 0 16 12"><path d="M2.5 5.5L6.3 9.3L13.5 2" fill="none" stroke="#f2f2f2" stroke-width="2"/></svg>
<div class="t" style="left:1212.30px;top:296.72px;color:#f0f0f0;font-size:14.67px;font-weight:400;letter-spacing:-0.198px;">Tree</div>
<div class="t" style="left:1212.30px;top:321.72px;color:#f0f0f0;font-size:14.67px;font-weight:400;letter-spacing:-0.016px;">None</div>
<div class="t" style="left:1212.30px;top:347.72px;color:#f0f0f0;font-size:14.67px;font-weight:400;letter-spacing:0.198px;">Details</div>
<svg style="position:absolute;left:1187px;top:349px" width="14" height="14" viewBox="0 0 14 14"><rect x="0" y="0" width="14" height="1" fill="#8c8c8c"/><rect x="0" y="4" width="14" height="1" fill="#8c8c8c"/><rect x="0" y="8" width="14" height="1" fill="#8c8c8c"/><rect x="0" y="12" width="14" height="1" fill="#8c8c8c"/></svg>
<div class="t" style="left:1212.30px;top:373.72px;color:#f0f0f0;font-size:14.67px;font-weight:400;letter-spacing:0.112px;">Details, large</div>
<svg style="position:absolute;left:1187px;top:375px" width="14" height="15" viewBox="0 0 14 15"><rect x="0" y="0" width="14" height="2" fill="#8c8c8c"/><rect x="0" y="4" width="14" height="2" fill="#8c8c8c"/><rect x="0" y="8" width="14" height="2" fill="#8c8c8c"/><rect x="0" y="12" width="14" height="2" fill="#8c8c8c"/></svg>
<div class="t" style="left:1212.30px;top:399.72px;color:#f0f0f0;font-size:14.67px;font-weight:400;letter-spacing:0.562px;">List</div>
<svg style="position:absolute;left:1187px;top:401px" width="14" height="14" viewBox="0 0 14 14"><rect x="0" y="0" width="6" height="1" fill="#8c8c8c"/><rect x="8" y="0" width="6" height="1" fill="#8c8c8c"/><rect x="0" y="4" width="6" height="1" fill="#8c8c8c"/><rect x="8" y="4" width="6" height="1" fill="#8c8c8c"/><rect x="0" y="8" width="6" height="1" fill="#8c8c8c"/><rect x="8" y="8" width="6" height="1" fill="#8c8c8c"/><rect x="0" y="12" width="6" height="1" fill="#8c8c8c"/><rect x="8" y="12" width="6" height="1" fill="#8c8c8c"/></svg>
<div class="t" style="left:1212.30px;top:425.72px;color:#f0f0f0;font-size:14.67px;font-weight:400;letter-spacing:0.185px;">List, large</div>
<svg style="position:absolute;left:1187px;top:427px" width="14" height="15" viewBox="0 0 14 15"><rect x="0" y="0" width="6" height="2" fill="#8c8c8c"/><rect x="8" y="0" width="6" height="2" fill="#8c8c8c"/><rect x="0" y="4" width="6" height="2" fill="#8c8c8c"/><rect x="8" y="4" width="6" height="2" fill="#8c8c8c"/><rect x="0" y="8" width="6" height="2" fill="#8c8c8c"/><rect x="8" y="8" width="6" height="2" fill="#8c8c8c"/><rect x="0" y="12" width="6" height="2" fill="#8c8c8c"/><rect x="8" y="12" width="6" height="2" fill="#8c8c8c"/></svg>
<div class="t" style="left:1212.30px;top:451.72px;color:#f0f0f0;font-size:14.67px;font-weight:400;letter-spacing:-0.138px;">Icons and images</div>
<svg style="position:absolute;left:1187px;top:453px" width="14" height="14" viewBox="0 0 14 14"><rect x="0" y="0" width="4" height="4" fill="#7a7a7a"/><rect x="0" y="5" width="4" height="4" fill="#7a7a7a"/><rect x="0" y="10" width="4" height="4" fill="#7a7a7a"/><rect x="5" y="0" width="4" height="4" fill="#7a7a7a"/><rect x="5" y="5" width="4" height="4" fill="#7a7a7a"/><rect x="5" y="10" width="4" height="4" fill="#7a7a7a"/><rect x="10" y="0" width="4" height="4" fill="#7a7a7a"/><rect x="10" y="5" width="4" height="4" fill="#7a7a7a"/><rect x="10" y="10" width="4" height="4" fill="#7a7a7a"/></svg>
<div class="t" style="left:1212.30px;top:479.22px;color:#f0f0f0;font-size:14.67px;font-weight:400;letter-spacing:0.099px;">Status bar</div>
<svg style="position:absolute;left:1188px;top:481.5px" width="16" height="12" viewBox="0 0 16 12"><path d="M2.5 5.5L6.3 9.3L13.5 2" fill="none" stroke="#f2f2f2" stroke-width="2"/></svg>
<div class="t" style="left:1212.30px;top:503.72px;color:#f0f0f0;font-size:14.67px;font-weight:400;letter-spacing:0.336px;">Bookmarks</div>
<div class="t" style="left:1212.30px;top:528.72px;color:#f0f0f0;font-size:14.67px;font-weight:400;letter-spacing:0.515px;">History</div>
<div class="t" style="left:1212.30px;top:553.72px;color:#f0f0f0;font-size:14.67px;font-weight:400;letter-spacing:0.115px;">Session history</div>
<div class="t" style="left:1212.30px;top:578.72px;color:#f0f0f0;font-size:14.67px;font-weight:400;letter-spacing:0.483px;">Clipboard</div>
<div class="t" style="left:1212.30px;top:603.72px;color:#f0f0f0;font-size:14.67px;font-weight:400;letter-spacing:-0.016px;">None</div>
</body></html>
